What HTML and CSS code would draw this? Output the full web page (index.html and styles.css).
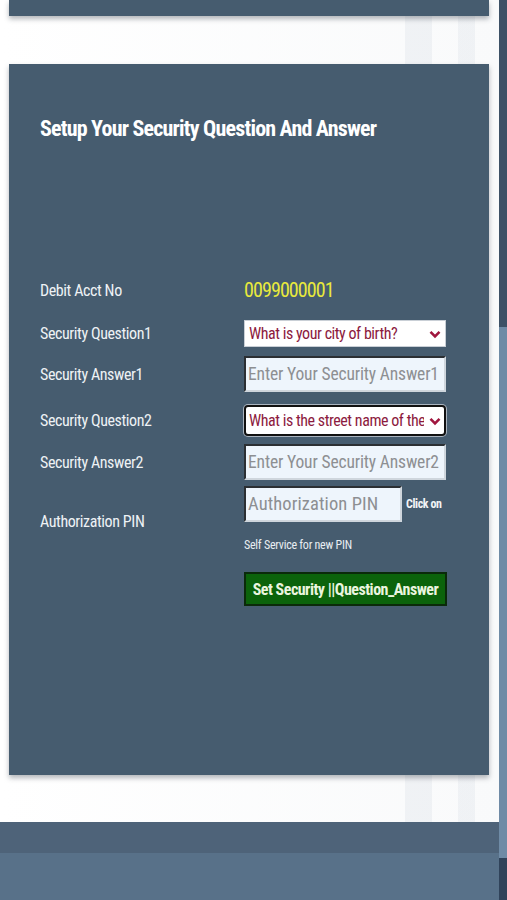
FILE: index.html
```html
<!DOCTYPE html>
<html>
<head>
<meta charset="utf-8">
<title>Security Question</title>
<link rel="stylesheet" href="styles.css">
</head>
<body>
<div class="page">
  <div class="main">
    <div class="card card-top"></div>
    <div class="card card-form">
      <h1 class="title">Setup Your Security Question And Answer</h1>
      <div class="form">
        <div class="row row-debit">
          <div class="label">Debit Acct No</div>
          <div class="value">0099000001</div>
        </div>
        <div class="row row-q1">
          <div class="label">Security Question1</div>
          <div class="select-wrap">
            <select class="select"><option>What is your city of birth?</option></select>
            <svg class="chev" width="12" height="9" viewBox="0 0 12 9"><path d="M1.5 1.8 L6 6.3 L10.5 1.8" fill="none" stroke="#a0163e" stroke-width="2.6"/></svg>
          </div>
        </div>
        <div class="row row-a1">
          <div class="label">Security Answer1</div>
          <input class="input" type="text" placeholder="Enter Your Security Answer1">
        </div>
        <div class="row row-q2">
          <div class="label">Security Question2</div>
          <div class="select-wrap">
            <select class="select select-focus"><option>What is the street name of the house you grew up in?</option></select>
            <svg class="chev" width="12" height="9" viewBox="0 0 12 9"><path d="M1.5 1.8 L6 6.3 L10.5 1.8" fill="none" stroke="#a0163e" stroke-width="2.6"/></svg>
          </div>
        </div>
        <div class="row row-a2">
          <div class="label">Security Answer2</div>
          <input class="input" type="text" placeholder="Enter Your Security Answer2">
        </div>
        <div class="row row-pin">
          <div class="label">Authorization PIN</div>
          <div class="pin-col">
            <div class="pin-line">
              <input class="input input-pin" type="password" placeholder="Authorization PIN">
              <span class="click">Click on</span>
            </div>
            <div class="self">Self Service for new PIN</div>
          </div>
        </div>
        <div class="row row-btn">
          <div class="label"></div>
          <button class="btn">Set Security ||Question_Answer</button>
        </div>
      </div>
    </div>
    <div class="footer-a"></div>
    <div class="footer-b"></div>
  </div>
  <div class="rail">
    <div class="rail-top"></div>
    <div class="rail-mid"></div>
    <div class="rail-bot"></div>
  </div>
</div>
</body>
</html>
```
FILE: styles.css
```css
* { box-sizing: border-box; }
html, body { margin: 0; padding: 0; }
body {
  width: 507px;
  height: 900px;
  overflow: hidden;
  background: #ffffff;
  font-family: "Roboto Condensed", "Liberation Sans Narrow", "DejaVu Sans Condensed", Roboto, sans-serif;
  font-stretch: condensed;
}
.page {
  display: flex;
  height: 900px;
}
.main {
  width: 499px;
  display: flex;
  flex-direction: column;
  background:
    linear-gradient(to right, transparent 0, transparent 405px, rgba(215,221,228,0.3) 405px, rgba(215,221,228,0.3) 432px, transparent 432px, transparent 458px, rgba(205,212,222,0.22) 458px, rgba(205,212,222,0.22) 475px, transparent 475px),
    linear-gradient(to right, #ffffff, #f9fafb);
}
.card {
  background: #465c6f;
  margin: 0 10px 0 9px;
  box-shadow: 0 3px 5px rgba(40, 50, 60, 0.35);
}
.card-top {
  height: 16px;
}
.card-form {
  margin-top: 48px;
  height: 711px;
  padding: 52px 0 0 31px;
}
.title {
  margin: 0;
  font-size: 22px;
  line-height: 26px;
  font-weight: 700;
  letter-spacing: -0.8px;
  color: #ffffff;
}
.form {
  margin-top: 133px;
  display: flex;
  flex-direction: column;
}
.row {
  display: flex;
  align-items: center;
}
.label {
  width: 204px;
  flex: none;
  font-size: 16px;
  letter-spacing: -0.4px;
  color: #eef2f5;
}
.row-debit { height: 30px; }
.row-q1 { margin-top: 15px; height: 27px; }
.row-a1 { margin-top: 9px; height: 36px; }
.row-q2 { margin-top: 13px; height: 31px; }
.row-a2 { margin-top: 8px; height: 36px; }
.row-pin { margin-top: 6px; height: 70px; }
.row-btn { margin-top: 16px; height: 34px; }
.value {
  font-size: 20px;
  letter-spacing: -0.9px;
  color: #e9ea3c;
}
.select-wrap {
  position: relative;
  width: 202px;
  height: 100%;
}
.select {
  appearance: none;
  -webkit-appearance: none;
  width: 100%;
  height: 100%;
  margin: 0;
  padding: 0 20px 0 4px;
  background: #ffffff;
  border: 1px solid #c9cfd6;
  border-radius: 0;
  color: #8c1a3e;
  font-family: inherit;
  font-stretch: condensed;
  font-size: 16px;
  letter-spacing: -0.45px;
  outline: none;
}
.select-focus {
  border: 2px solid #111111;
  border-radius: 4px;
  box-shadow: 0 0 0 1px #aab4bf;
  padding-left: 3px;
}
.chev {
  position: absolute;
  right: 5px;
  top: 50%;
  margin-top: -4px;
}
.input {
  width: 202px;
  height: 36px;
  margin: 0;
  padding: 0 2px;
  background: #eef5fc;
  border: 2px solid;
  border-color: #2b2f33 #cfd6dd #cfd6dd #2b2f33;
  font-family: inherit;
  font-stretch: condensed;
  font-size: 17.5px;
  letter-spacing: -0.15px;
  color: #333;
  outline: none;
}
.input::placeholder { color: #8d8f92; }
.pin-col {
  display: flex;
  flex-direction: column;
  height: 100%;
}
.pin-line {
  display: flex;
  align-items: center;
  gap: 4px;
}
.input-pin {
  width: 158px;
  font-size: 18.5px;
  letter-spacing: 0.1px;
}
.click {
  font-size: 12px;
  font-weight: 700;
  letter-spacing: -0.4px;
  color: #f2f4f6;
}
.self {
  margin-top: 16px;
  font-size: 12px;
  letter-spacing: -0.25px;
  color: #e8edf2;
}
.btn {
  width: 203px;
  height: 34px;
  margin: 0;
  padding: 0;
  white-space: nowrap;
  background: #0b630b;
  border: 2px solid #0a2a0a;
  color: #eaf5df;
  font-family: inherit;
  font-stretch: condensed;
  font-size: 16px;
  font-weight: 700;
  letter-spacing: -0.5px;
}
.footer-a {
  margin-top: 47px;
  height: 31px;
  background: #4e6379;
  flex: none;
}
.footer-b {
  flex: 1;
  background: #587189;
}
.rail {
  width: 8px;
  display: flex;
  flex-direction: column;
}
.rail-top { height: 327px; background: #3d5166; }
.rail-mid { height: 531px; background: #6f8ba6; }
.rail-bot { flex: 1; background: #30435a; }
```
